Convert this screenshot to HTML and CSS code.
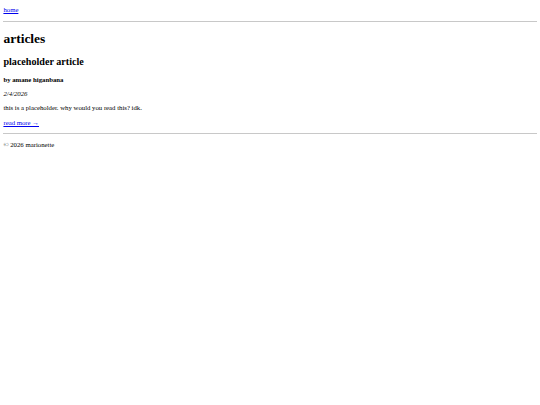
FILE: index.html
```html
<!DOCTYPE html>
<html lang="en">
<head>
<meta charset="utf-8">
<title>articles</title>
<link rel="stylesheet" href="styles.css">
</head>
<body>
<header class="site-header">
<p><a href="#">home</a></p>
</header>
<hr>
<main>
<h1>articles</h1>
<article class="post">
<h2>placeholder article</h2>
<p class="byline"><strong>by amane higanbana</strong></p>
<p class="date"><em>2/4/2026</em></p>
<p class="excerpt">this is a placeholder. why would you read this? idk.</p>
<p class="more"><a href="#">read more →</a></p>
</article>
</main>
<hr>
<footer class="site-footer">
<p>© 2026 marionette</p>
</footer>
</body>
</html>
```
FILE: styles.css
```css
body {
  margin: 3.4px;
  font-family: "Liberation Serif", "Times New Roman", serif;
  font-size: 6.75px;
  color: #000;
  background: #fff;
}
p {
  margin: 6.75px 0;
}
.site-header p {
  margin-top: 3px;
  margin-bottom: 7.75px;
}
h1 {
  font-size: 13.5px;
  margin: 9px 0;
}
h2 {
  font-size: 10.125px;
  margin: 8.4px 0;
}
.date {
  padding-top: 1.2px;
}
.excerpt {
  padding-top: 0;
}
.more {
  padding-top: 0.6px;
  padding-bottom: 1px;
}
hr {
  margin: 3.4px 0;
  border: 0;
  border-top: 1px solid #c8c8c8;
}
a {
  color: #0000ee;
}
```
